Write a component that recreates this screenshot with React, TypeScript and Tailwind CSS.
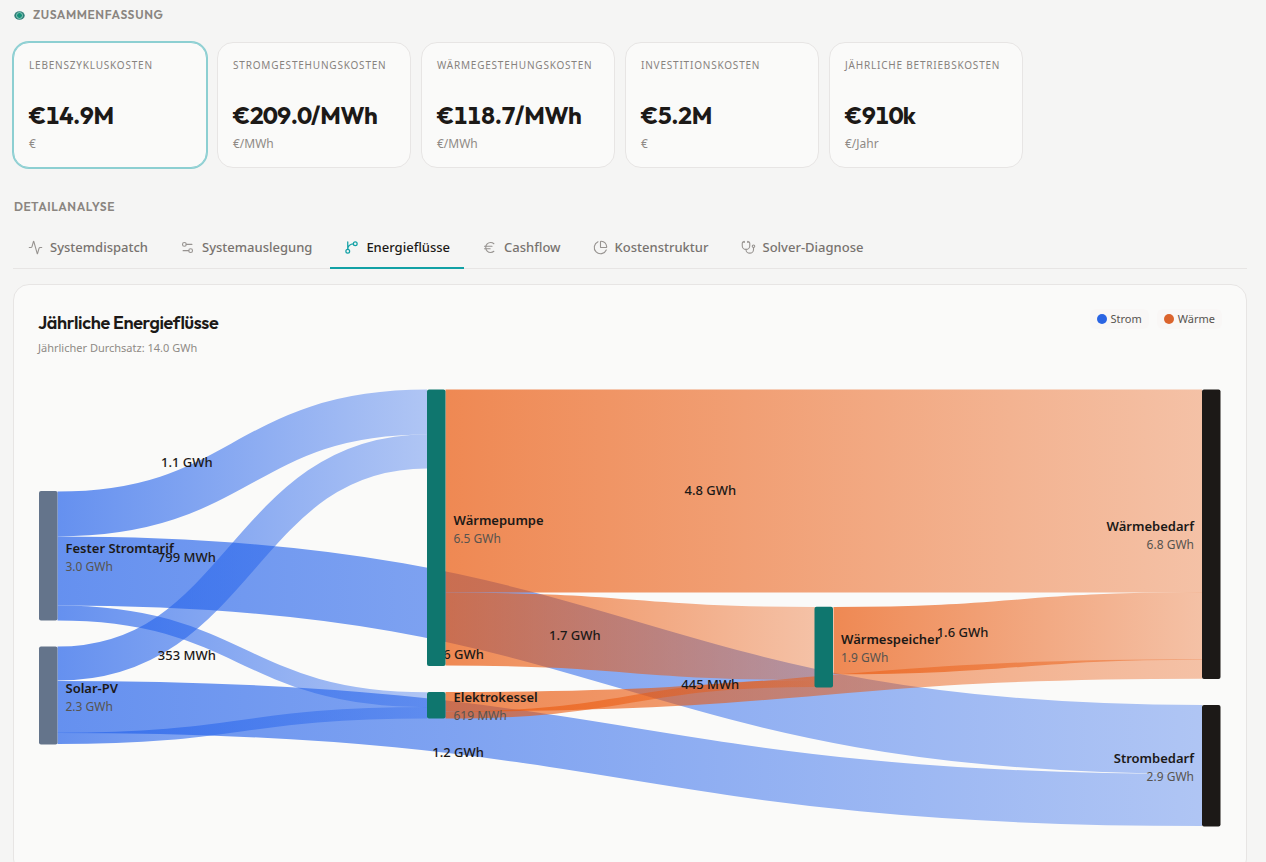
import React, { useState } from 'react';
import { Activity, ChartPie, Euro, Settings2, Stethoscope } from 'lucide-react';

type IconProps = { size: number; strokeWidth: number; className?: string };

function FlowBranch({ size, strokeWidth, className }: IconProps) {
  return (
    <svg
      width={size}
      height={size}
      viewBox="0 0 24 24"
      fill="none"
      stroke="currentColor"
      strokeWidth={strokeWidth}
      strokeLinecap="round"
      strokeLinejoin="round"
      className={className}
      aria-hidden="true"
    >
      <path d="M15 6a9 9 0 0 0-9 9V3" />
      <circle cx="18" cy="6" r="3" />
      <circle cx="6" cy="18" r="3" />
    </svg>
  );
}

const kpis = [
  { label: 'Lebenszykluskosten', value: '€14.9M', unit: '€', active: true },
  { label: 'Stromgestehungskosten', value: '€209.0/MWh', unit: '€/MWh' },
  { label: 'Wärmegestehungskosten', value: '€118.7/MWh', unit: '€/MWh' },
  { label: 'Investitionskosten', value: '€5.2M', unit: '€' },
  { label: 'Jährliche Betriebskosten', value: '€910k', unit: '€/Jahr' },
];

const tabs = [
  { name: 'Systemdispatch', icon: Activity },
  { name: 'Systemauslegung', icon: Settings2 },
  { name: 'Energieflüsse', icon: FlowBranch },
  { name: 'Cashflow', icon: Euro },
  { name: 'Kostenstruktur', icon: ChartPie },
  { name: 'Solver-Diagnose', icon: Stethoscope },
];

const POWER = '#2563eb';
const HEAT = '#ea580c';

type Link = { x0: number; y0: number; x1: number; y1: number; w: number; color: string; label?: string };

// Link centre lines; w is the band width, proportional to the energy carried.
const links: Link[] = [
  { x0: 19.5, y0: 144, x1: 389, y1: 42, w: 44.8, color: POWER, label: '1.1 GWh' },
  { x0: 19.5, y0: 201, x1: 1164, y1: 369.5, w: 69, color: POWER, label: '1.6 GWh' },
  { x0: 19.5, y0: 243, x1: 389, y1: 329.7, w: 15, color: POWER, label: '353 MWh' },
  { x0: 19.5, y0: 293.6, x1: 389, y1: 81.4, w: 34, color: POWER, label: '799 MWh' },
  { x0: 19.5, y0: 336.9, x1: 1164, y1: 430, w: 52, color: POWER, label: '1.2 GWh' },
  { x0: 19.5, y0: 368.4, x1: 389, y1: 342.8, w: 11.4, color: POWER },
  { x0: 407.5, y0: 121, x1: 1164, y1: 121, w: 203, color: HEAT, label: '4.8 GWh' },
  { x0: 407.5, y0: 259, x1: 777, y1: 273.5, w: 73, color: HEAT, label: '1.7 GWh' },
  { x0: 407.5, y0: 331.8, x1: 1164, y1: 299, w: 19.4, color: HEAT, label: '445 MWh' },
  { x0: 407.5, y0: 345, x1: 777, y1: 313.5, w: 7.2, color: HEAT },
  { x0: 795.5, y0: 270.6, x1: 1164, y1: 256, w: 67.4, color: HEAT, label: '1.6 GWh' },
];

const nodes = [
  { name: 'Fester Stromtarif', value: '3.0 GWh', x: 1, y: 121, h: 129.5, fill: '#64748b' },
  { name: 'Solar-PV', value: '2.3 GWh', x: 1, y: 276.5, h: 98, fill: '#64748b' },
  { name: 'Wärmepumpe', value: '6.5 GWh', x: 389, y: 19.5, h: 276.5, fill: '#0f766e' },
  { name: 'Elektrokessel', value: '619 MWh', x: 389, y: 322, h: 26.5, fill: '#0f766e' },
  { name: 'Wärmespeicher', value: '1.9 GWh', x: 776.5, y: 236.8, h: 80.6, fill: '#0f766e' },
  { name: 'Wärmebedarf', value: '6.8 GWh', x: 1164, y: 19.5, h: 289.5, fill: '#1c1917', end: true },
  { name: 'Strombedarf', value: '2.9 GWh', x: 1164, y: 335, h: 121.5, fill: '#1c1917', end: true },
];

const NODE_WIDTH = 18.5;

function linkPath({ x0, y0, x1, y1 }: Link) {
  const mid = (x0 + x1) / 2;
  return `M${x0},${y0}C${mid},${y0} ${mid},${y1} ${x1},${y1}`;
}

function Sankey() {
  return (
    <svg viewBox="0 0 1184 480" className="mt-[13px] block w-full" role="img" aria-label="Jährliche Energieflüsse">
      <defs>
        {links.map((l, i) => (
          <linearGradient key={i} id={`flow-${i}`} gradientUnits="userSpaceOnUse" x1={l.x0} x2={l.x1} y1="0" y2="0">
            <stop offset="0" stopColor={l.color} stopOpacity="0.7" />
            <stop offset="1" stopColor={l.color} stopOpacity="0.35" />
          </linearGradient>
        ))}
      </defs>
      {links.map((l, i) => (
        <path key={i} d={linkPath(l)} fill="none" stroke={`url(#flow-${i})`} strokeWidth={l.w} />
      ))}
      {links.map(
        (l, i) =>
          l.label && (
            <text
              key={i}
              x={l.x0 + (l.x1 - l.x0) * 0.35}
              y={(l.y0 + l.y1) / 2 + 4}
              textAnchor="middle"
              className="fill-[#1c1917] text-[13px] font-medium"
            >
              {l.label}
            </text>
          ),
      )}
      {nodes.map((n) => {
        const textX = n.end ? n.x - 8 : n.x + NODE_WIDTH + 8;
        const mid = n.y + n.h / 2;
        return (
          <g key={n.name} textAnchor={n.end ? 'end' : 'start'}>
            <rect x={n.x} y={n.y} width={NODE_WIDTH} height={n.h} rx="2" fill={n.fill} />
            <text x={textX} y={mid - 3} className="fill-[#1c1917] text-[13px] font-semibold">
              {n.name}
            </text>
            <text x={textX} y={mid + 15} className="fill-[#57534e] text-xs">
              {n.value}
            </text>
          </g>
        );
      })}
    </svg>
  );
}

const headingClass =
  "pl-px font-['Outfit','Lato',sans-serif] text-xs leading-4 font-semibold tracking-wider text-[#8a8580] uppercase";

export default function App() {
  const [active, setActive] = useState('Energieflüsse');

  return (
    <main className="min-h-screen bg-[#f5f5f4] pt-[7px] pr-[19px] pb-4 pl-[13px] font-['Noto_Sans',sans-serif] text-[#1c1917]">
      <section>
        <h2 className={`flex items-center gap-2 ${headingClass}`}>
          <svg viewBox="0 0 11 9" className="h-[9px] w-[11px]" aria-hidden="true">
            <ellipse cx="5.5" cy="4.5" rx="5.2" ry="4.3" fill="#2f7f78" />
            <circle cx="5.5" cy="4.5" r="3" fill="#159078" stroke="#a7d8cd" strokeWidth="0.8" />
          </svg>
          Zusammenfassung
        </h2>
        <div className="mt-[19px] grid max-w-[1010px] grid-cols-5 gap-[10px]">
          {kpis.map((k) => (
            <article
              key={k.label}
              className={`rounded-2xl border bg-[#fafaf9] px-[15px] py-[15px] ${
                k.active ? 'border-[#8ccfd2] ring-1 ring-[#8ccfd2]' : 'border-[#e7e5e4]'
              }`}
            >
              <h3 className="text-[10px] leading-[15px] tracking-[0.8px] whitespace-nowrap text-[#87827e] uppercase">
                {k.label}
              </h3>
              <p className="mt-[30px] font-['Outfit','Lato',sans-serif] text-2xl leading-6 font-bold tracking-[-0.02em] whitespace-nowrap tabular-nums">
                {k.value}
              </p>
              <p className="mt-[9px] text-xs leading-4 text-[#8f8a86]">{k.unit}</p>
            </article>
          ))}
        </div>
      </section>

      <section className="mt-[31px]">
        <h2 className={headingClass}>Detailanalyse</h2>
        <div role="tablist" className="mt-3 flex gap-1 border-b border-[#e7e5e4] pl-px">
          {tabs.map(({ name, icon: Icon }) => {
            const selected = name === active;
            return (
              <button
                key={name}
                type="button"
                role="tab"
                aria-selected={selected}
                onClick={() => setActive(name)}
                className={`-mb-px flex items-center gap-[7px] border-b-2 px-[14px] py-[10px] text-[13px] leading-5 font-medium whitespace-nowrap ${
                  selected ? 'border-[#12a1a5] text-[#1c1917]' : 'border-transparent text-[#78736f]'
                }`}
              >
                <Icon
                  size={15}
                  strokeWidth={selected ? 2 : 1.75}
                  className={selected ? 'text-[#12a1a5]' : 'opacity-75'}
                />
                {name}
              </button>
            );
          })}
        </div>

        <div className="mt-[15px] rounded-2xl border border-[#e7e5e4] bg-[#fafaf9] p-6">
          <header className="flex items-start justify-between">
            <div>
              <h3 className="font-['Outfit','Lato',sans-serif] text-lg leading-[27px] font-semibold tracking-[-0.02em]">
                Jährliche Energieflüsse
              </h3>
              <p className="mt-[3px] text-[11px] leading-[18px] text-[#8f8a86]">Jährlicher Durchsatz: 14.0 GWh</p>
            </div>
            <ul className="flex gap-2 text-[11px] leading-5 text-[#57534e]">
              <li className="flex items-center gap-1 rounded-md bg-[#f9f7f6] px-[7px]">
                <span className="size-[10px] rounded-full bg-[#2a65e3]" />
                Strom
              </li>
              <li className="flex items-center gap-1 rounded-md bg-[#f9f7f6] px-[7px]">
                <span className="size-[10px] rounded-full bg-[#db642d]" />
                Wärme
              </li>
            </ul>
          </header>
          <Sankey />
        </div>
      </section>
    </main>
  );
}
